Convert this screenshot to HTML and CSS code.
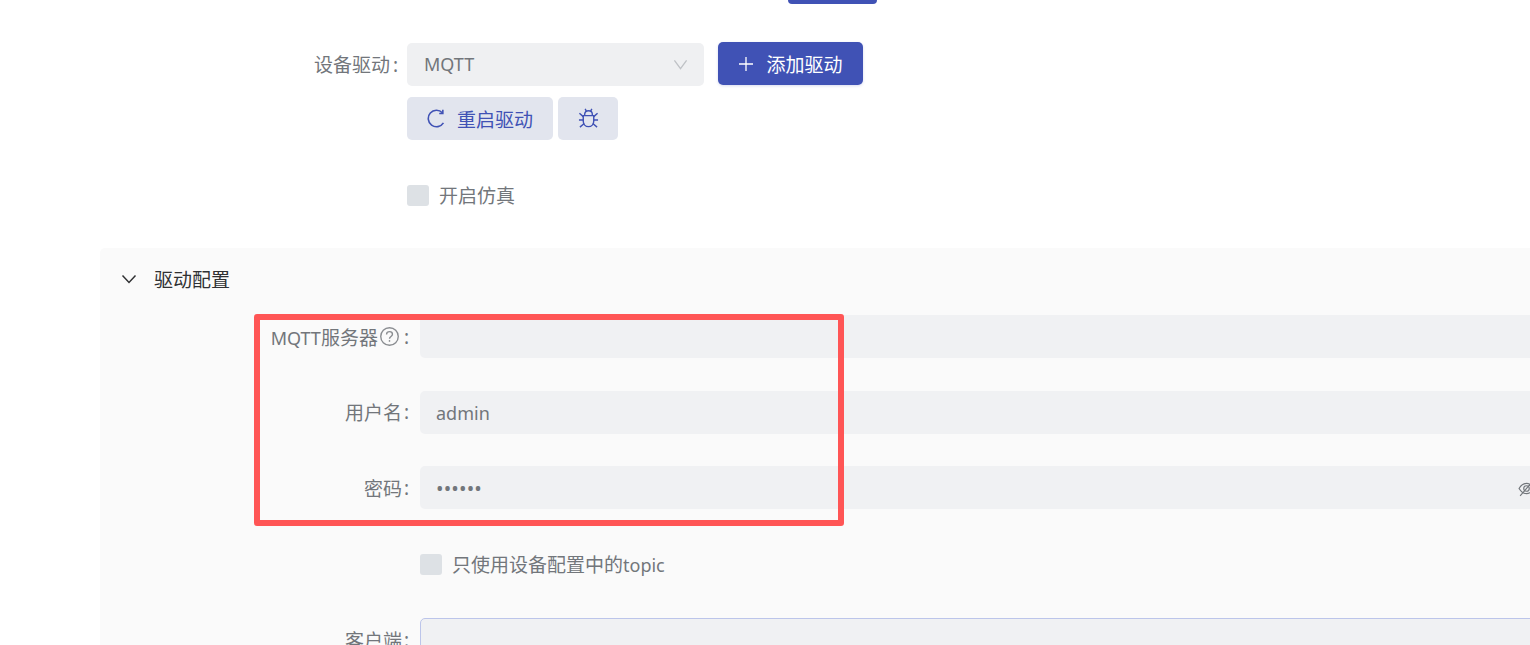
FILE: index.html
```html
<!DOCTYPE html>
<html lang="en">
<head>
    <meta charset="UTF-8">
    <meta name="viewport" content="width=device-width, initial-scale=1.0">
    <title>设备驱动</title>
    <link rel="stylesheet" href="styles.css">
</head>
<body>
    <div class="page">
        <div class="top-button"></div>

        <div class="driver-row">
            <label class="driver-label">设备驱动<span class="colon">:</span></label>
            <div class="select">
                <span class="latin">MQTT</span>
                <svg class="select-arrow" viewBox="0 0 16 16"><path d="M1.5 3.5 8 12.5 14.5 3.5"/></svg>
            </div>
            <button class="button button-primary">
                <svg class="icon" viewBox="0 0 16 16"><path d="M8 1v14M1 8h14"/></svg>
                <span>添加驱动</span>
            </button>
        </div>

        <div class="action-row">
            <button class="button button-light button-restart">
                <svg class="icon" viewBox="0 0 18 18"><path d="M14.6 3.600A7.800 7.800 0 1 0 15.600 13.200"/><path d="M15 .8v3.400h-3.400"/></svg>
                <span>重启驱动</span>
            </button>
            <button class="button button-light button-bug">
                <svg class="icon" viewBox="0 0 22 22"><path d="M7 8V6.500C7 4.200 8.700 2.800 11 2.800s4 1.400 4 3.700V8"/><path d="M5.500 8h11v5.500c0 3.500-2.400 6-5.500 6s-5.500-2.500-5.500-6z"/><path d="M7.500 1l1.300 2.400M14.500 1l-1.300 2.400M1.500 5.500 5.500 9M20.500 5.500 16.500 9M1 12.500h4.500M21 12.500h-4.500M2 20l4.500-3.800M20 20l-4.500-3.800"/></svg>
            </button>
        </div>

        <div class="check-row check-row-top">
            <span class="checkbox"></span>
            <span>开启仿真</span>
        </div>

        <div class="panel">
            <div class="panel-header">
                <svg class="panel-arrow" viewBox="0 0 16 16"><path d="M1.500 4.500 8 11.500 14.500 4.500"/></svg>
                <span>驱动配置</span>
            </div>

            <div class="form-row">
                <label class="form-label">
                    <span><span class="latin">MQTT</span>服务器</span>
                    <svg class="help" viewBox="0 0 18 18"><circle cx="9" cy="9" r="8.300"/><path d="M6.200 7C6.200 5.300 7.400 4.400 9 4.400s2.800.9 2.800 2.500c0 2.200-2.800 2.100-2.800 4.300"/><path d="M9 12.400v1.600"/></svg>
                    <span class="colon">:</span>
                </label>
                <div class="input"></div>
            </div>
            <div class="form-row">
                <label class="form-label">用户名<span class="colon">:</span></label>
                <div class="input"><span class="latin">admin</span></div>
            </div>
            <div class="form-row">
                <label class="form-label">密码<span class="colon">:</span></label>
                <div class="input">
                    <span class="dots">••••••</span>
                    <svg class="eye" viewBox="0 0 16 16"><path d="M1 8c2-3.200 4.300-4.800 7-4.800S13 4.800 15 8c-2 3.200-4.300 4.800-7 4.800S3 11.200 1 8z"/><circle cx="8" cy="8" r="2.600"/><path d="M2 15 14 1"/></svg>
                </div>
            </div>

            <div class="check-row check-row-form">
                <span class="checkbox"></span>
                <span>只使用设备配置中的<span class="latin">topic</span></span>
            </div>

            <div class="form-row form-row-last">
                <label class="form-label">客户端<span class="colon">:</span></label>
                <div class="input input-focus"></div>
            </div>
        </div>

        <div class="highlight"></div>
    </div>
</body>
</html>
```

FILE: styles.css
```css
* {
    box-sizing: border-box;
}
html, body {
    margin: 0;
    height: 645px;
    overflow: hidden;
    background: #ffffff;
}
body {
    font-family: "Noto Sans", "Noto Sans CJK SC", sans-serif;
    font-size: 19px;
    color: #72767b;
}
.latin {
    font-size: 18px;
}
.colon {
    margin-left: 2px;
}
.page {
    position: relative;
    width: 1600px;
    height: 645px;
    overflow: hidden;
}
.top-button {
    width: 89px;
    height: 4px;
    margin-left: 788px;
    background: #4052b5;
    border-radius: 0 0 4px 4px;
}
.driver-row {
    display: flex;
    align-items: center;
    height: 43px;
    margin-top: 38px;
}
.driver-label {
    width: 398px;
    margin-right: 9px;
    text-align: right;
}
.driver-label .colon {
    margin-left: 3px;
}
.select {
    display: flex;
    align-items: center;
    justify-content: space-between;
    width: 297px;
    height: 43px;
    margin-top: 1px;
    padding: 0 16px 0 17px;
    background: #eff0f2;
    border-radius: 5px;
}
.select-arrow {
    width: 15px;
    height: 15px;
    fill: none;
    stroke: #bfc2c6;
    stroke-width: 1.4;
}
.button {
    display: flex;
    align-items: center;
    justify-content: center;
    height: 43px;
    border: none;
    border-radius: 5px;
    font-family: inherit;
    font-size: 19px;
}
.button-primary {
    width: 145px;
    margin-left: 14px;
    gap: 12px;
    background: #4052b5;
    color: #ffffff;
    box-shadow: 0 1px 3px rgba(64, 82, 181, 0.2);
}
.button-primary .icon {
    width: 16px;
    height: 16px;
    stroke: #ffffff;
}
.button-light {
    background: #e2e5ee;
    color: #4052b5;
}
.icon {
    fill: none;
    stroke: #4052b5;
    stroke-width: 1.3;
}
.action-row {
    display: flex;
    gap: 5px;
    margin: 12px 0 0 407px;
}
.button-restart {
    width: 146px;
    gap: 11px;
}
.button-restart .icon {
    width: 19px;
    height: 19px;
    stroke-width: 1.5;
}
.button-bug {
    width: 60px;
}
.button-bug .icon {
    width: 21px;
    height: 21px;
    stroke-width: 1.5;
}
.check-row {
    display: flex;
    align-items: center;
    gap: 10px;
    height: 22px;
}
.check-row-top {
    margin: 44px 0 0 407px;
}
.check-row-form {
    margin: 44px 0 0 320px;
}
.checkbox {
    width: 22px;
    height: 21px;
    background: #dde1e5;
    border-radius: 3px;
}
.panel {
    margin: 42px 0 0 100px;
    height: 420px;
    background: #fafafa;
    border-radius: 5px;
}
.panel-header {
    display: flex;
    align-items: center;
    gap: 17px;
    height: 62px;
    padding: 0 0 0 21px;
    color: #303133;
}
.panel-arrow {
    width: 16px;
    height: 16px;
    fill: none;
    stroke: #303133;
    stroke-width: 1.5;
}
.form-row {
    display: flex;
    align-items: center;
    height: 43px;
    margin: 5px 0 32.500px;
}
.form-row + .form-row {
    margin-top: 0;
}
.form-row.form-row-last {
    margin-top: 43px;
}
.form-label {
    display: flex;
    align-items: center;
    justify-content: flex-end;
    width: 309px;
    margin-right: 11px;
    white-space: nowrap;
}
.input {
    display: flex;
    align-items: center;
    justify-content: space-between;
    width: 1130px;
    height: 43px;
    padding: 1px 16px 0;
    background: #f0f1f3;
    border-radius: 5px;
}
.dots {
    font-size: 20px;
    letter-spacing: 0.150px;
}
.eye {
    width: 17px;
    height: 17px;
    margin-right: -1px;
    fill: none;
    stroke: #72767b;
    stroke-width: 1.1;
}
.input-focus {
    border: 1px solid #bcc5ea;
}
.help {
    width: 19px;
    height: 19px;
    margin: 0 3px 0 2px;
    fill: none;
    stroke: #8a8d91;
    stroke-width: 1.300;
}
.highlight {
    position: absolute;
    left: 254px;
    top: 314px;
    width: 590px;
    height: 212px;
    border: 6px solid #ff5555;
    border-radius: 3px;
}
```
